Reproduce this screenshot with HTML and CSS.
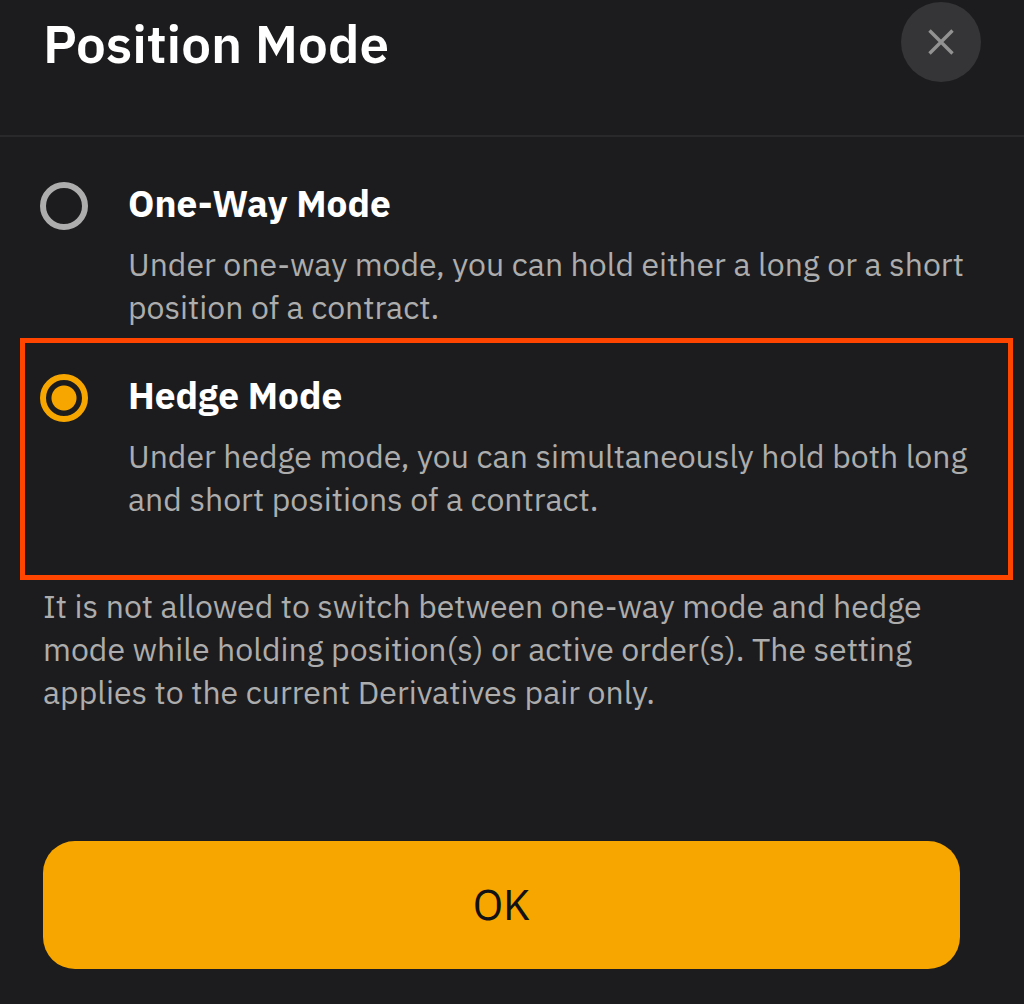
FILE: index.html
```html
<!DOCTYPE html>
<html lang="en">
<head>
  <meta charset="UTF-8" />
  <meta name="viewport" content="width=device-width, initial-scale=1.0"/>
  <title>Position Mode</title>
  <link rel="stylesheet" href="styles.css">
</head>
<body>

  <div class="header">
    <h1>Position Mode</h1>
    <button class="close" type="button" aria-label="Close">
      <svg viewBox="0 0 28 28" width="28" height="28" aria-hidden="true">
        <path d="M2.5 2.5L25.5 25.5M25.5 2.5L2.5 25.5" fill="none" stroke="currentColor" stroke-width="3.4"/>
      </svg>
    </button>
  </div>

  <form class="modes">
    <div class="option">
      <input type="radio" name="mode" id="oneWay" aria-describedby="oneWayText">
      <div class="option-details">
        <label for="oneWay">One-Way Mode</label>
        <p id="oneWayText">Under one-way mode, you can hold either a long or a short position of a contract.</p>
      </div>
    </div>

    <div class="option highlight">
      <input type="radio" name="mode" id="hedge" aria-describedby="hedgeText" checked>
      <div class="option-details">
        <label for="hedge">Hedge Mode</label>
        <p id="hedgeText">Under hedge mode, you can simultaneously hold both long and short positions of a contract.</p>
      </div>
    </div>

    <p class="note">It is not allowed to switch between one-way mode and hedge mode while holding position(s) or active order(s). The setting applies to the current Derivatives pair only.</p>

    <button class="ok" type="button">OK</button>
  </form>

</body>
</html>
```
FILE: styles.css
```css
* {
  box-sizing: border-box;
}

body {
  font-family: "IBM Plex Sans", Roboto, sans-serif;
  font-size: 32px;
  line-height: 43px;
  margin: 0;
  min-height: 100vh;
  background: #1c1c1e;
  color: #adadad;
}

h1,
p {
  margin: 0;
}

.header {
  display: flex;
  justify-content: space-between;
  align-items: flex-start;
  padding: 2px 43px 53px;
  border-bottom: 2px solid #29292b;
}

.header h1 {
  color: white;
  font-size: 53px;
  font-weight: 600;
  line-height: 84px;
  height: 80px;
}

.close {
  display: flex;
  align-items: center;
  justify-content: center;
  width: 80px;
  height: 80px;
  padding: 0;
  border: none;
  border-radius: 50%;
  background: #353537;
  color: #929292;
  cursor: pointer;
}

.option {
  display: flex;
  align-items: flex-start;
  gap: 40px;
  padding: 45px 40px 9px;
}

.option input {
  appearance: none;
  flex: none;
  width: 48px;
  height: 48px;
  margin: 0;
  border: 6px solid #adadad;
  border-radius: 50%;
  cursor: pointer;
}

.option input:checked {
  border-color: #f7a600;
  background: radial-gradient(circle, #f7a600 12px, transparent 13px);
}

.option-details {
  flex: 1;
}

.option label {
  display: block;
  margin-bottom: 18px;
  color: white;
  font-size: 37px;
  font-weight: 700;
  line-height: 43px;
}

.highlight {
  margin: 0 11px 0 20px;
  padding: 31px 15px 54px;
  border: 5px solid #ff4500;
}

.note {
  padding: 5px 64px 0 43px;
}

.ok {
  display: block;
  width: calc(100% - 107px);
  height: 128px;
  margin: 127px 64px 35px 43px;
  padding: 0 0 3px;
  border: none;
  border-radius: 32px;
  background: #f7a600;
  color: #121214;
  font-family: inherit;
  font-size: 43px;
  cursor: pointer;
}
```
